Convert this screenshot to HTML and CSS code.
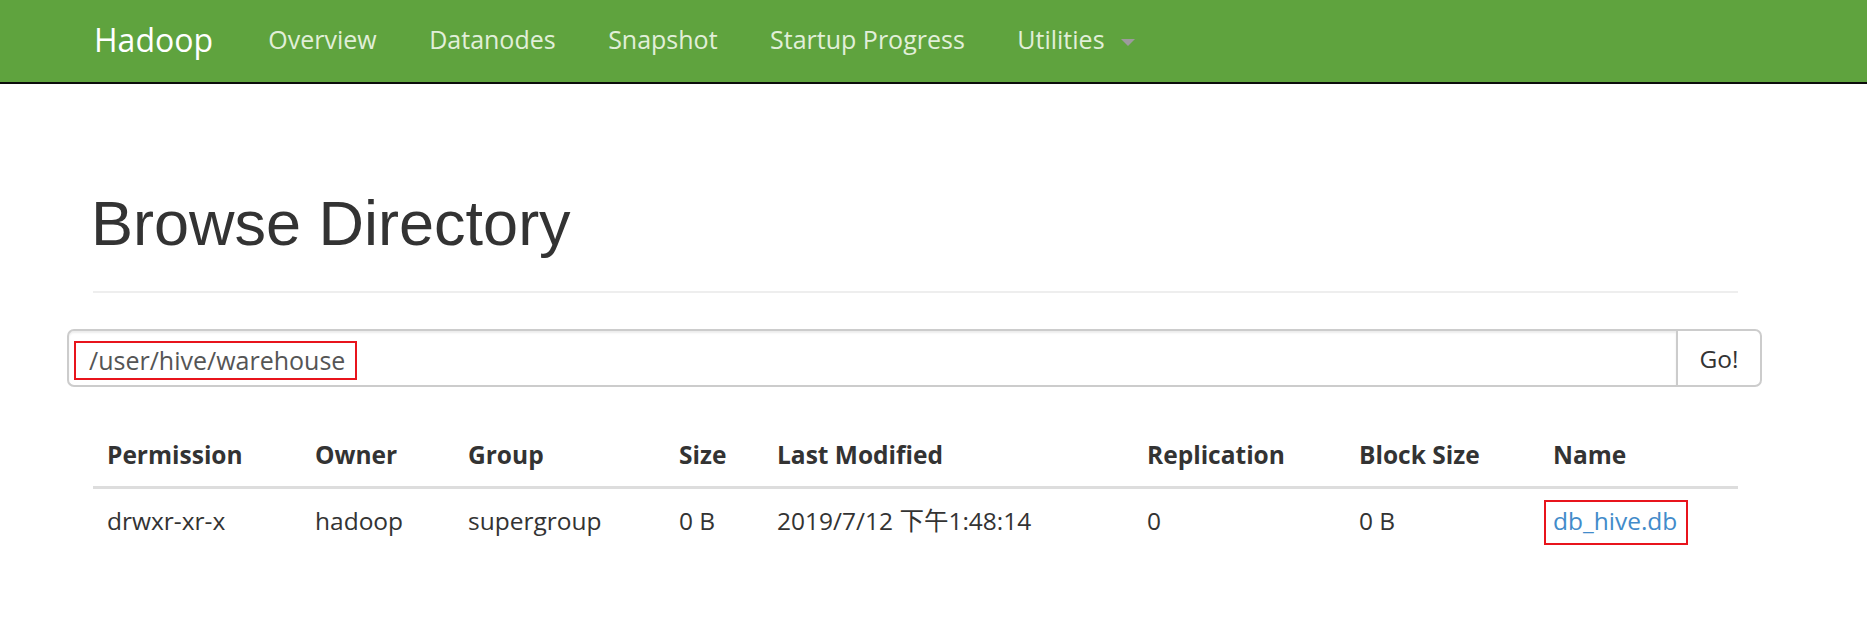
FILE: index.html
```html
<!DOCTYPE html>
<html lang="en">
<head>
<meta charset="utf-8">
<title>Browsing HDFS</title>
<link rel="stylesheet" href="styles.css">
</head>
<body>
<header class="navbar">
  <div class="nav-inner">
    <a class="brand" href="#">Hadoop</a>
    <ul class="nav">
      <li><a href="#">Overview</a></li>
      <li><a href="#">Datanodes</a></li>
      <li><a href="#">Snapshot</a></li>
      <li><a href="#">Startup Progress</a></li>
      <li><a href="#">Utilities <span class="caret"></span></a></li>
    </ul>
  </div>
</header>

<main class="main">
  <div class="page-header">
    <h1>Browse Directory</h1>
  </div>

  <form class="search">
    <div class="path-input"><span class="mark">/user/hive/warehouse</span></div>
    <button class="go" type="button">Go!</button>
  </form>

  <table class="listing">
    <colgroup>
      <col class="c-perm"><col class="c-owner"><col class="c-group"><col class="c-size">
      <col class="c-mod"><col class="c-rep"><col class="c-block"><col class="c-name">
    </colgroup>
    <thead>
      <tr>
        <th>Permission</th><th>Owner</th><th>Group</th><th>Size</th>
        <th>Last Modified</th><th>Replication</th><th>Block Size</th><th>Name</th>
      </tr>
    </thead>
    <tbody>
      <tr>
        <td>drwxr-xr-x</td><td>hadoop</td><td>supergroup</td><td>0 B</td>
        <td>2019/7/12 下午1:48:14</td><td>0</td><td>0 B</td>
        <td><a class="hl" href="#">db_hive.db</a></td>
      </tr>
    </tbody>
  </table>
</main>
</body>
</html>
```

FILE: styles.css
```css
html, body {
  margin: 0;
  padding: 0;
  background: #fff;
}

body {
  font-family: "Open Sans", "Noto Sans CJK SC", sans-serif;
  font-size: 24.5px;
  line-height: 35px;
  color: #333;
}

/* ---------- navbar ---------- */
.navbar {
  height: 82px;
  background: #5fa33e;
  border-bottom: 2px solid #0c0c0c;
}

.nav-inner {
  display: flex;
  align-items: flex-start;
  padding-left: 94px;
}

.brand {
  font-size: 32px;
  line-height: 79px;
  color: #fff;
  padding-right: 29px;
  text-decoration: none;
}

.nav {
  display: flex;
  list-style: none;
  margin: 0;
  padding: 0;
}

.nav a {
  display: block;
  padding: 0 26.25px;
  font-size: 25px;
  line-height: 79px;
  color: #e1efd9;
  text-decoration: none;
}

.caret {
  display: inline-block;
  width: 0;
  height: 0;
  margin-left: 10px;
  vertical-align: middle;
  border-top: 7px solid #9d9a9d;
  border-left: 7px solid transparent;
  border-right: 7px solid transparent;
}

/* ---------- content ---------- */
.main {
  width: 1645px;
  margin-left: 93px;
}

.page-header {
  margin: 105px 0 0;
  padding-bottom: 33px;
  border-bottom: 2px solid #eee;
}

.page-header h1 {
  margin: 0 0 0 -2px;
  font-family: "Liberation Sans", Arial, sans-serif;
  font-size: 63px;
  font-weight: normal;
  line-height: 1.1;
  color: #333;
}

.search {
  display: flex;
  height: 58px;
  margin: 36px -24px 0 -26px;
}

.path-input {
  flex: 1;
  box-sizing: border-box;
  border: 2px solid #ccc;
  border-right: none;
  border-radius: 7px 0 0 7px;
  padding: 10px 5px 0;
  box-shadow: inset 0 2px 2px rgba(0, 0, 0, 0.075);
  font-size: 25px;
  line-height: 35px;
}

.mark {
  display: inline-block;
  border: 2px solid #e8141c;
  padding: 0 10px 0 13px;
  line-height: 35px;
  color: #555;
}

.go {
  width: 86px;
  box-sizing: border-box;
  border: 2px solid #ccc;
  border-radius: 0 7px 7px 0;
  background: #fff;
  font-family: inherit;
  font-size: 24.5px;
  color: #333;
  padding: 0;
  display: flex;
  align-items: center;
  justify-content: center;
}

/* ---------- table ---------- */
.listing {
  width: 1645px;
  margin-top: 36px;
  table-layout: fixed;
  border-collapse: separate;
  border-spacing: 0;
}

.c-perm  { width: 208px; }
.c-owner { width: 153px; }
.c-group { width: 211px; }
.c-size  { width: 98px; }
.c-mod   { width: 370px; }
.c-rep   { width: 212px; }
.c-block { width: 194px; }
.c-name  { width: 199px; }

.listing th,
.listing td {
  padding: 14px;
  font-size: 24.5px;
  line-height: 35px;
  text-align: left;
  vertical-align: top;
  white-space: nowrap;
}

.listing th {
  font-weight: 700;
  border-bottom: 3px solid #ddd;
}

.hl {
  display: inline-block;
  margin: -3px 0 0 -9px;
  padding: 1px 9px 5px 7px;
  border: 2px solid #e8141c;
  line-height: 35px;
  color: #428bca;
  text-decoration: none;
}
```
